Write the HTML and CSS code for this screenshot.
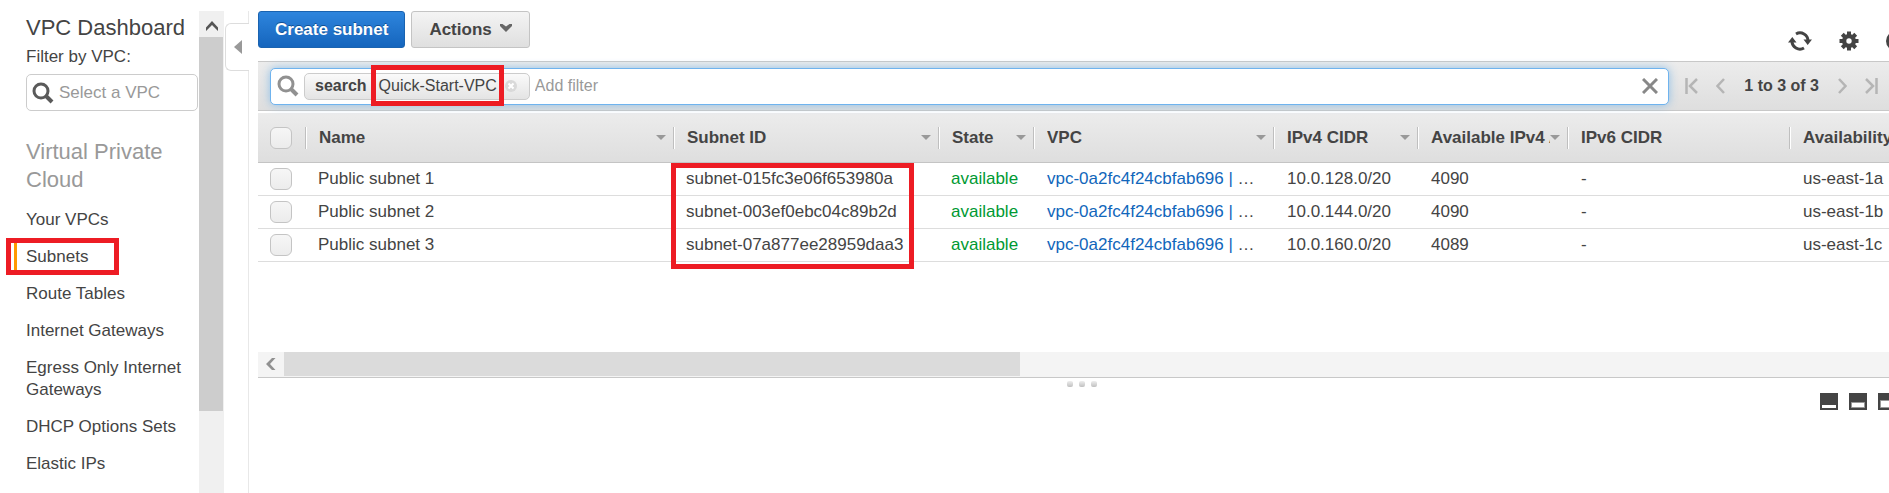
FILE: index.html
```html
<!DOCTYPE html>
<html lang="en">
<head>
<meta charset="utf-8">
<title>VPC Dashboard</title>
<link rel="stylesheet" href="styles.css">
</head>
<body>
<div class="app">
  <aside class="sidebar">
    <div class="sidebar-body">
      <h1 class="title">VPC Dashboard</h1>
      <label class="filter-label" for="vpc">Filter by VPC:</label>
      <div class="vpc-box">
        <svg class="glass" width="22" height="22" viewBox="0 0 22 22"><circle cx="9" cy="9" r="7" fill="none" stroke="#5a5a5a" stroke-width="3"/><path d="M14 14l6 6" stroke="#5a5a5a" stroke-width="4"/></svg>
        <input id="vpc" type="text" placeholder="Select a VPC">
      </div>
      <h2 class="section">Virtual Private Cloud</h2>
      <nav class="nav">
        <a href="#">Your VPCs</a>
        <a href="#" class="current">Subnets</a>
        <a href="#">Route Tables</a>
        <a href="#">Internet Gateways</a>
        <a href="#">Egress Only Internet Gateways</a>
        <a href="#">DHCP Options Sets</a>
        <a href="#">Elastic IPs</a>
      </nav>
    </div>
    <div class="vbar">
      <button class="vbar-up" aria-label="Scroll up"><svg width="12" height="10" viewBox="0 0 12 10"><path d="M0 6.500L6 0l6 6.500V10L6 4 0 10z" fill="#555"/></svg></button>
      <div class="vbar-thumb"></div>
    </div>
  </aside>
  <div class="rail">
    <button class="collapse" aria-label="Collapse sidebar"><svg width="8" height="14" viewBox="0 0 8 14"><path d="M0 7l8-7v14z" fill="#999"/></svg></button>
  </div>
  <main class="main">
    <div class="toolbar">
      <button class="btn primary">Create subnet</button>
      <button class="btn">Actions <svg width="12" height="8" viewBox="0 0 12 8"><path d="M0 0h2.500L6 2.500 9.500 0H12v2L6 8 0 2z" fill="#666"/></svg></button>
      <div class="tools">
        <button class="icon" aria-label="Refresh"><svg width="24" height="22" viewBox="0 0 24 22"><g fill="none" stroke="#444" stroke-width="3"><path d="M8 4A8 8 0 0 1 20 11"/><path d="M16 18A8 8 0 0 1 4 11"/></g><path d="M15.500 9.500H24L19.700 15zM0 12.500h8.500L4.300 7z" fill="#444"/></svg></button>
        <button class="icon" aria-label="Settings"><svg width="20" height="20" viewBox="-10 -10 20 20"><g fill="#444"><g id="t"><path d="M-2-9.500h4v19h-4zM-9.500-2h19v4h-19z"/></g><use href="#t" transform="rotate(45)"/><circle r="7"/></g><circle r="2.700" fill="#fff"/></svg></button>
        <button class="icon" aria-label="Help"><svg width="20" height="20" viewBox="0 0 20 20"><circle cx="10" cy="10" r="10" fill="#444"/></svg></button>
      </div>
    </div>
    <div class="filterbar">
      <div class="search">
        <svg class="glass" width="22" height="22" viewBox="0 0 22 22"><circle cx="9" cy="9" r="7" fill="none" stroke="#919191" stroke-width="3"/><path d="M14 14l6 6" stroke="#919191" stroke-width="4"/></svg>
        <span class="token"><b>search</b><span class="value marked">Quick-Start-VPC</span><button class="remove" aria-label="Remove filter"><svg width="12" height="12" viewBox="0 0 12 12"><circle cx="6" cy="6" r="6" fill="#d9d9d9"/><path d="M3.500 3.500l5 5m0-5l-5 5" stroke="#fff" stroke-width="2"/></svg></button></span>
        <input class="add" type="text" placeholder="Add filter" aria-label="Add filter">
        <button class="icon" aria-label="Clear"><svg width="16" height="16" viewBox="0 0 16 16"><path d="M1 1l14 14M15 1L1 15" stroke="#888" stroke-width="3"/></svg></button>
      </div>
      <div class="pager">
        <button class="icon" aria-label="First page"><svg width="13" height="16" viewBox="0 0 13 16"><path d="M1.500 0v16M12 1L5 8l7 7" fill="none" stroke="#b5b5b5" stroke-width="2.500"/></svg></button>
        <button class="icon" aria-label="Previous page"><svg width="9" height="16" viewBox="0 0 9 16"><path d="M8 1L1.500 8 8 15" fill="none" stroke="#b5b5b5" stroke-width="2.500"/></svg></button>
        <span class="count">1 to 3 of 3</span>
        <button class="icon" aria-label="Next page"><svg width="9" height="16" viewBox="0 0 9 16"><path d="M1 1l6.500 7L1 15" fill="none" stroke="#b5b5b5" stroke-width="2.500"/></svg></button>
        <button class="icon" aria-label="Last page"><svg width="13" height="16" viewBox="0 0 13 16"><path d="M11.500 0v16M1 1l7 7-7 7" fill="none" stroke="#b5b5b5" stroke-width="2.500"/></svg></button>
      </div>
    </div>
    <div class="grid">
      <table class="subnets">
        <colgroup><col class="c-check"><col class="c-name"><col class="c-id"><col class="c-state"><col class="c-vpc"><col class="c-v4"><col class="c-avail"><col class="c-v6"><col></colgroup>
        <thead>
          <tr>
            <th><input type="checkbox" aria-label="Select all"></th>
            <th><div class="head sort"><span>Name</span></div></th>
            <th><div class="head sort"><span>Subnet ID</span></div></th>
            <th><div class="head sort"><span>State</span></div></th>
            <th><div class="head sort"><span>VPC</span></div></th>
            <th><div class="head sort"><span>IPv4 CIDR</span></div></th>
            <th><div class="head sort"><span>Available IPv4 Addresses</span></div></th>
            <th><div class="head"><span>IPv6 CIDR</span></div></th>
            <th><div class="head last"><span>Availability</span></div></th>
          </tr>
        </thead>
        <tbody>
          <tr><td><input type="checkbox" aria-label="Select Public subnet 1"></td><td>Public subnet 1</td><td class="ids-marked">subnet-015fc3e06f653980a</td><td class="ok">available</td><td class="vpc"><a href="#">vpc-0a2fc4f24cbfab696 |</a> …</td><td>10.0.128.0/20</td><td>4090</td><td>-</td><td>us-east-1a</td></tr>
          <tr><td><input type="checkbox" aria-label="Select Public subnet 2"></td><td>Public subnet 2</td><td>subnet-003ef0ebc04c89b2d</td><td class="ok">available</td><td class="vpc"><a href="#">vpc-0a2fc4f24cbfab696 |</a> …</td><td>10.0.144.0/20</td><td>4090</td><td>-</td><td>us-east-1b</td></tr>
          <tr><td><input type="checkbox" aria-label="Select Public subnet 3"></td><td>Public subnet 3</td><td>subnet-07a877ee28959daa3</td><td class="ok">available</td><td class="vpc"><a href="#">vpc-0a2fc4f24cbfab696 |</a> …</td><td>10.0.160.0/20</td><td>4089</td><td>-</td><td>us-east-1c</td></tr>
        </tbody>
      </table>
    </div>
    <div class="hbar">
      <button class="hbar-left" aria-label="Scroll left"><svg width="10" height="12" viewBox="0 0 10 12"><path d="M6 0h3.500L4 6l5.500 6H6L0 6z" fill="#919191"/></svg></button>
      <div class="hbar-thumb"></div>
    </div>
    <div class="splitter"><i></i><i></i><i></i></div>
    <div class="layouts">
      <button class="icon" aria-label="Small panel"><svg width="18" height="17" viewBox="0 0 18 17"><path d="M0 0h18v17H0z" fill="#444"/><path d="M2 12h14v3H2z" fill="#fff"/></svg></button>
      <button class="icon" aria-label="Half panel"><svg width="18" height="17" viewBox="0 0 18 17"><path d="M0 0h18v17H0z" fill="#444"/><path d="M2.500 9.500h13v5h-13z" fill="#fff" stroke="#999"/></svg></button>
      <button class="icon" aria-label="Full panel"><svg width="18" height="17" viewBox="0 0 18 17"><path d="M0 0h18v17H0z" fill="#444"/><path d="M2.500 7.500h13v7h-13z" fill="#fff" stroke="#999"/></svg></button>
    </div>
  </main>
</div>
</body>
</html>
```
FILE: styles.css
```css
*, *::before, *::after { box-sizing: border-box; }
body {
  margin: 0;
  overflow: hidden;
  background: #fff;
  color: #444;
  font: 17px/22px "Liberation Sans", Arial, sans-serif;
}
button, input { font: inherit; color: inherit; }
button { margin: 0; padding: 0; border: 0; background: none; display: inline-flex; align-items: center; justify-content: center; flex: none; }
input { margin: 0; border: 0; padding: 0; outline: 0; background: none; min-width: 0; }
input::placeholder { color: #999; opacity: 1; }
a { text-decoration: none; color: inherit; }
svg { display: block; flex: none; }

.app { display: flex; height: 100vh; padding-top: 11px; overflow: hidden; }

/* Sidebar */
.sidebar { display: flex; flex: none; width: 224px; }
.sidebar-body { flex: 1; min-width: 0; padding-left: 26px; }
.title { margin: 0; font-size: 22px; line-height: 34px; font-weight: 400; white-space: nowrap; }
.filter-label { display: block; margin: 1px 0 6px; }
.vpc-box {
  display: flex; align-items: center; gap: 5px;
  height: 37px; margin-right: 1px; padding-left: 5px;
  border: 1px solid #ccc; border-radius: 5px;
}
.vpc-box input { flex: 1; }
.section { margin: 27px 0 7px; font-size: 22px; line-height: 28px; font-weight: 400; color: #999; }
.nav { display: flex; flex-direction: column; }
.nav a { padding: 8px 0 7px; }
.nav .current { position: relative; }
.nav .current::before {
  content: ""; position: absolute; left: -12px; top: 5px;
  width: 3px; height: 27px; background: #f90;
}
.nav .current::after {
  content: ""; position: absolute; left: -20px; top: 0;
  width: 113px; height: 37px; border: 5px solid #ed1c24;
}
.vbar { display: flex; flex-direction: column; flex: none; width: 25px; background: #f0f0f0; }
.vbar-up { width: 25px; height: 26px; }
.vbar-up svg { margin-top: 3px; }
.vbar-thumb { width: 24px; height: 374px; background: #cdcdcd; }

.rail { flex: none; width: 25px; padding-top: 12px; border-right: 1px solid #e8e8e8; }
.collapse {
  position: relative; left: 1px; width: 24px; height: 48px;
  background: #fff; border: 1px solid #ddd; border-right: 0; border-radius: 6px 0 0 6px;
}

/* Main */
.main { flex: 1; min-width: 0; padding-left: 9px; }
.toolbar { display: flex; gap: 6px; height: 50px; }
.btn {
  height: 37px; padding: 0 17px; gap: 8px;
  font-weight: 700; white-space: nowrap;
  border: 1px solid #c4c4c4; border-radius: 3px;
  background: linear-gradient(#f4f4f4, #dfdfdf);
}
.btn svg { margin-top: -4px; }
.btn.primary {
  padding: 0 16px; color: #fff; border-color: #1a63b0;
  background: linear-gradient(#2e85dd, #1565bd);
  text-shadow: 0 -1px 0 #114f93;
}
.tools { display: flex; align-items: center; gap: 27px; margin: 10px -17px 0 auto; }

.filterbar {
  display: flex; align-items: center; height: 50px; padding-left: 12px;
  border: solid #c8c8c8; border-width: 1px 0;
  background: linear-gradient(#ececec, #dedede);
}
.search {
  flex: 1; display: flex; align-items: center; gap: 5px; min-width: 0;
  height: 37px; padding: 0 10px 0 6px; font-size: 16px;
  background: #fff; border: 1px solid #6fb3ee; border-radius: 5px;
  box-shadow: 0 0 10px #8fbfe6;
}
.token {
  display: flex; align-items: center; flex: none; height: 27px; padding: 0 12px 0 10px;
  border: 1px solid #ccc; border-radius: 5px;
  background: linear-gradient(#fafafa, #e4e4e4);
}
.value { margin: 0 8px 0 12px; }
.marked { position: relative; }
.marked::after {
  content: ""; position: absolute; inset: -10px -7px -9px -8px;
  border: 5px solid #ed1c24;
}
.add { flex: 1; }
.pager { display: flex; align-items: center; flex: none; padding: 0 11px 0 16px; }
.pager .icon + .icon { margin-left: 18px; }
.count { margin: 0 19px; font-size: 16px; font-weight: 700; }

/* Table */
.grid { height: 239px; padding-top: 2px; overflow: hidden; }
.subnets { width: 100%; table-layout: fixed; border-collapse: separate; border-spacing: 0; }
.c-check { width: 47px; }
.c-name { width: 368px; }
.c-id { width: 265px; }
.c-state { width: 95px; }
.c-vpc { width: 240px; }
.c-v4 { width: 144px; }
.c-avail { width: 150px; }
.c-v6 { width: 222px; }
th, td { padding: 0 0 0 13px; text-align: left; white-space: nowrap; }
th {
  height: 50px; padding: 0; border-bottom: 1px solid #c4c4c4;
  background: linear-gradient(#ececec, #dedede);
}
th:first-child, td:first-child { padding-left: 12px; }
.head {
  display: flex; align-items: center; height: 22px; padding: 0 7px 0 13px;
  border-left: 1px solid #bfbfbf; box-shadow: inset 1px 0 0 #fff;
}
.head.last { padding-right: 0; }
.head span { flex: 1; min-width: 0; overflow: hidden; }
.sort::after {
  content: ""; width: 10px; border: solid transparent; border-width: 5px 5px 0; border-top-color: #999;
}
td { height: 33px; border-bottom: 1px solid #ddd; }
tbody td:nth-child(n+5) { padding-left: 14px; }
tbody .vpc { padding-left: 15px; }
.vpc a { color: #1166bb; }
.ok { color: #093; }
.ids-marked { position: relative; }
.ids-marked::after {
  content: ""; position: absolute; left: -2px; top: 0;
  width: 243px; height: 106px; border: 5px solid #ed1c24;
}
input[type="checkbox"] {
  appearance: none; display: block; width: 22px; height: 22px;
  border: 1px solid #c4c4c4; border-radius: 6px;
  background: linear-gradient(#f6f6f6, #ececec);
}

/* Bottom */
.hbar { display: flex; height: 26px; padding-bottom: 1px; background: #f4f4f4; border-bottom: 1px solid #c8c8c8; margin-top: 2px; }
.hbar-left { width: 26px; }
.hbar-thumb { flex: 0 1 736px; background: #dbdbdb; }
.splitter { display: flex; justify-content: center; gap: 6px; padding: 3px 0 6px 17px; }
.splitter i { width: 6px; height: 6px; border-radius: 2px; background: linear-gradient(#eee, #c0c0c0); }
.layouts { display: flex; justify-content: flex-end; gap: 11px; margin-right: -7px; }
```
